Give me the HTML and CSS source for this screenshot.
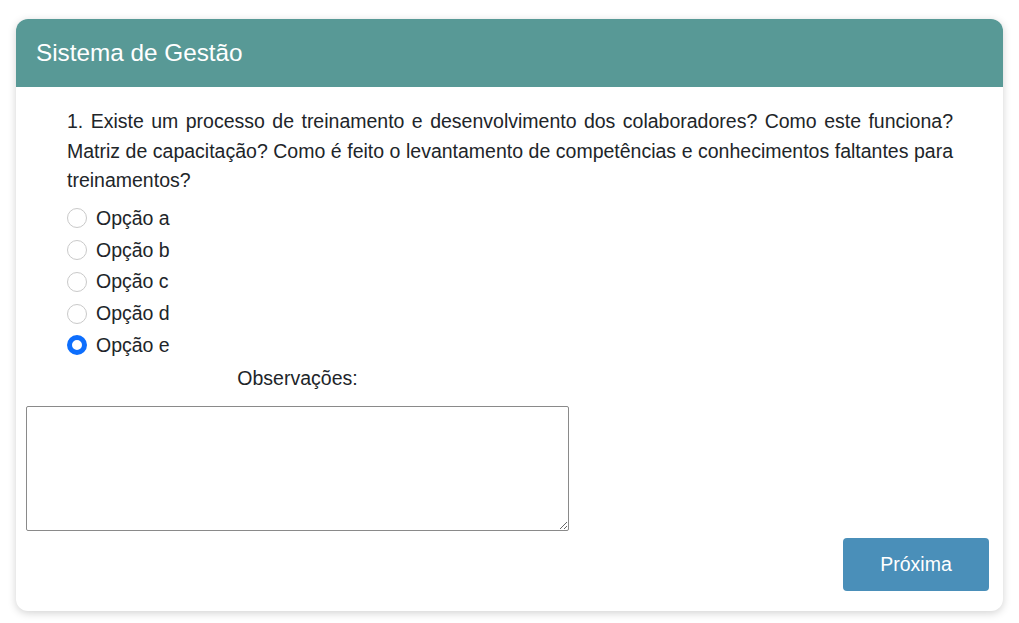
FILE: index.html
```html
<!DOCTYPE html>
<html lang="pt">
<head>
<meta charset="utf-8">
<title>Sistema de Gestão</title>
<link rel="stylesheet" href="styles.css">
</head>
<body>
<div class="card">
  <div class="card-header">Sistema de Gestão</div>
  <div class="card-body">
    <div class="question">
      <p class="question-text">1. Existe um processo de treinamento e desenvolvimento dos colaboradores? Como este funciona? Matriz de capacitação? Como é feito o levantamento de competências e conhecimentos faltantes para treinamentos?</p>
      <div class="options">
        <label class="option"><input type="radio" name="q1" value="a"><span>Opção a</span></label>
        <label class="option"><input type="radio" name="q1" value="b"><span>Opção b</span></label>
        <label class="option"><input type="radio" name="q1" value="c"><span>Opção c</span></label>
        <label class="option"><input type="radio" name="q1" value="d"><span>Opção d</span></label>
        <label class="option"><input type="radio" name="q1" value="e" checked><span>Opção e</span></label>
      </div>
    </div>
    <div class="obs">
      <label class="obs-label" for="obs">Observações:</label>
      <textarea id="obs" class="obs-input"></textarea>
    </div>
    <div class="actions">
      <button class="btn-next" type="button">Próxima</button>
    </div>
  </div>
</div>
</body>
</html>
```
FILE: styles.css
```css
* { box-sizing: border-box; }
html, body { margin: 0; background: #ffffff; }
body {
  padding: 19px 16px;
  font-family: "Liberation Sans", Arial, sans-serif;
  color: #212529;
}
.card {
  background: #fff;
  border-radius: 12px;
  box-shadow: 0 2px 8px rgba(0, 0, 0, 0.18);
  overflow: hidden;
}
.card-header {
  background: #589996;
  color: #fff;
  height: 68px;
  display: flex;
  align-items: center;
  padding: 0 20px;
  font-size: 24.3px;
}
.card-body {
  padding: 20px 10px 20px;
}
.question {
  padding: 0 40px 0 41px;
}
.question-text {
  margin: 0;
  font-size: 19.5px;
  line-height: 29.5px;
  text-align: justify;
}
.options {
  display: flex;
  flex-direction: column;
  margin-top: 7px;
}
.option {
  display: flex;
  align-items: center;
  height: 31.75px;
  font-size: 19.5px;
  gap: 9px;
}
.option input {
  appearance: none;
  -webkit-appearance: none;
  margin: 0;
  width: 20px;
  height: 20px;
  border: 1px solid #c9c9c9;
  border-radius: 50%;
  background: #fff;
  flex: none;
}
.option input:checked {
  border: 5.5px solid #0d6efd;
  background: #fff;
}
.obs {
  width: 543px;
  display: flex;
  flex-direction: column;
  align-items: center;
  margin-top: 6px;
}
.obs-label {
  font-size: 19.5px;
  line-height: 22px;
  margin-bottom: 17px;
}
.obs-input {
  width: 543px;
  height: 125px;
  border: 1px solid #8a8a8a;
  border-radius: 2px;
  resize: both;
  font-family: inherit;
}
.actions {
  display: flex;
  justify-content: flex-end;
  margin-top: 7px;
  padding-right: 4px;
}
.btn-next {
  width: 146px;
  height: 53px;
  background: #4a8fb9;
  color: #fff;
  border: none;
  border-radius: 4px;
  font-family: inherit;
  font-size: 19.5px;
}
```
